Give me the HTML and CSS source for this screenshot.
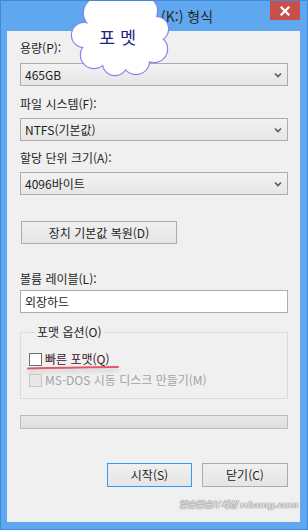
FILE: index.html
```html
<!DOCTYPE html>
<html lang="ko">
<head>
<meta charset="utf-8">
<link rel="stylesheet" href="styles.css">
</head>
<body>
<div class="window">
  <div class="titlebar">
    <span class="title">(K:) 형식</span>
    <div class="close">
      <svg width="10" height="10" viewBox="0 0 10 10"><path d="M1.5 1.5 L8.5 8.5 M8.5 1.5 L1.5 8.5" stroke="#fff" stroke-width="2.2" stroke-linecap="square"/></svg>
    </div>
  </div>
  <div class="content">
    <div class="label l1">용량(P):</div>
    <div class="select"><span>465GB</span><svg class="chev" width="8" height="6" viewBox="0 0 8 6"><path d="M1 1.5 L4 4.5 L7 1.5" fill="none" stroke="#5a5a5a" stroke-width="1.6"/></svg></div>
    <div class="label l2">파일 시스템(F):</div>
    <div class="select"><span>NTFS(기본값)</span><svg class="chev" width="8" height="6" viewBox="0 0 8 6"><path d="M1 1.5 L4 4.5 L7 1.5" fill="none" stroke="#5a5a5a" stroke-width="1.6"/></svg></div>
    <div class="label l3">할당 단위 크기(A):</div>
    <div class="select"><span>4096바이트</span><svg class="chev" width="8" height="6" viewBox="0 0 8 6"><path d="M1 1.5 L4 4.5 L7 1.5" fill="none" stroke="#5a5a5a" stroke-width="1.6"/></svg></div>
    <div class="btn restore">장치 기본값 복원(D)</div>
    <div class="label l4">볼륨 레이블(L):</div>
    <div class="input">외장하드</div>
    <fieldset class="group">
      <legend>포맷 옵션(O)</legend>
      <div class="check-row quick">
        <span class="box"></span><span class="qtext">빠른 포맷(Q)</span>
        <svg class="mark" width="96" height="8" viewBox="0 0 96 8"><path d="M2 3.5 Q40 2.5 92 2" fill="none" stroke="#e25a6a" stroke-width="2" stroke-linecap="round"/></svg>
      </div>
      <div class="check-row disabled">
        <span class="box"></span><span>MS-DOS 시동 디스크 만들기(M)</span>
      </div>
    </fieldset>
    <div class="progress"></div>
    <div class="actions">
      <div class="btn default">시작(S)</div>
      <div class="btn">닫기(C)</div>
    </div>
    <div class="watermark">알송달송IT세상 rdsong.com</div>
  </div>
  <svg class="cloud" width="100" height="84" viewBox="0 0 100 84">
    <g fill="#fff" stroke="#8585ee" stroke-width="2.4">
      <circle cx="50" cy="42" r="30"/>
      <circle cx="30" cy="20" r="16"/>
      <circle cx="52" cy="13" r="14"/>
      <circle cx="72" cy="18" r="15"/>
      <circle cx="86" cy="36" r="12"/>
      <circle cx="84" cy="56" r="13"/>
      <circle cx="66" cy="68" r="13"/>
      <circle cx="45" cy="70" r="12"/>
      <circle cx="24" cy="62" r="13"/>
      <circle cx="14" cy="42" r="12"/>
    </g>
    <g fill="#fff">
      <circle cx="50" cy="42" r="30"/>
      <circle cx="30" cy="20" r="16"/>
      <circle cx="52" cy="13" r="14"/>
      <circle cx="72" cy="18" r="15"/>
      <circle cx="86" cy="36" r="12"/>
      <circle cx="84" cy="56" r="13"/>
      <circle cx="66" cy="68" r="13"/>
      <circle cx="45" cy="70" r="12"/>
      <circle cx="24" cy="62" r="13"/>
      <circle cx="14" cy="42" r="12"/>
    </g>
  </svg>
  <div class="cloud-text">포 멧</div>
</div>
</body>
</html>
```
FILE: styles.css
```css
* { box-sizing: border-box; }
html, body { margin: 0; padding: 0; }
body {
  width: 308px;
  height: 530px;
  font-family: "Noto Sans CJK KR", "Noto Sans", sans-serif;
  font-size: 12px;
  color: #1e1e1e;
}
.window {
  position: relative;
  width: 308px;
  height: 530px;
  overflow: hidden;
  background: #5fa7ef;
  border: 1px solid #3d8ad9;
  padding: 0 7px 7px 6px;
  display: flex;
  flex-direction: column;
}
.titlebar {
  height: 30px;
  display: flex;
  align-items: flex-start;
  flex: none;
}
.title {
  margin-left: 154px;
  margin-top: 6px;
  font-size: 14px;
  line-height: 18px;
  color: #2a2a2a;
  flex: 1;
}
.close {
  width: 30px;
  height: 19px;
  background: #c7504b;
  display: flex;
  align-items: center;
  justify-content: center;
}
.content {
  flex: 1;
  background: #f0f0f0;
  padding: 9px 12px 0 13px;
  display: flex;
  flex-direction: column;
}
.label { line-height: 16px; height: 16px; }
.l1 { margin-bottom: 7px; }
.l2 { margin-top: 10px; margin-bottom: 6px; }
.l3 { margin-top: 9px; margin-bottom: 6px; }
.l4 { margin-top: 27px; margin-bottom: 3px; }
.select {
  height: 23px;
  border: 1px solid #acacac;
  background: linear-gradient(#f2f2f2, #e6e6e6);
  display: flex;
  align-items: center;
  padding: 0 5px 0 4px;
  line-height: 16px;
}
.select span { flex: 1; }
.chev { display: block; }
.btn {
  height: 24px;
  border: 1px solid #acacac;
  background: linear-gradient(#f0f0f0, #e5e5e5);
  display: flex;
  align-items: center;
  justify-content: center;
  line-height: 16px;
}
.restore {
  margin-top: 26px;
  margin-left: 1px;
  width: 156px;
  height: 23px;
}
.input {
  height: 23px;
  border: 1px solid #abadb3;
  background: #fff;
  padding: 0 4px;
  line-height: 21px;
}
.group {
  margin: 11px 0 0 0;
  border: 1px solid #dcdcdc;
  padding: 11px 8px 10px 8px;
  min-width: 0;
}
.group legend {
  padding: 0 2px;
  margin-left: 6px;
  line-height: 16px;
}
.check-row {
  position: relative;
  height: 16px;
  display: flex;
  align-items: center;
  line-height: 16px;
}
.check-row + .check-row { margin-top: 5px; }
.box {
  width: 13px;
  height: 13px;
  border: 1px solid #707070;
  background: #fff;
  margin-right: 3px;
  flex: none;
}
.qtext { color: #3a1426; }
.mark {
  position: absolute;
  left: -3px;
  top: 14px;
  filter: drop-shadow(0 3px 2px rgba(0,0,0,0.18));
}
.disabled { color: #a3a3a3; }
.disabled .box { border-color: #c6c6c6; background: #e8e8e8; }
.progress {
  margin-top: 16px;
  height: 14px;
  border: 1px solid #bcbcbc;
  background: linear-gradient(#e8e8e8, #dedede);
}
.actions {
  margin-top: 34px;
  display: flex;
  justify-content: flex-end;
  gap: 10px;
}
.actions .btn { width: 86px; }
.actions .default { width: 85px; border-color: #3399ff; }
.watermark {
  margin-top: 12px;
  align-self: flex-end;
  margin-right: -10px;
  font-family: "DejaVu Sans", "Noto Sans CJK KR", sans-serif;
  font-size: 9.5px;
  font-weight: bold;
  font-style: italic;
  line-height: 12px;
  color: #e2e2e2;
  text-shadow: 0 0 1px #7a7a7a, 0 0 1px #7a7a7a;
  letter-spacing: -0.5px;
}
.cloud {
  position: absolute;
  left: 69px;
  top: -8px;
}
.cloud-text {
  position: absolute;
  left: 98px;
  top: 25px;
  font-size: 17.5px;
  line-height: 22px;
  color: #1f1f86;
}
```
